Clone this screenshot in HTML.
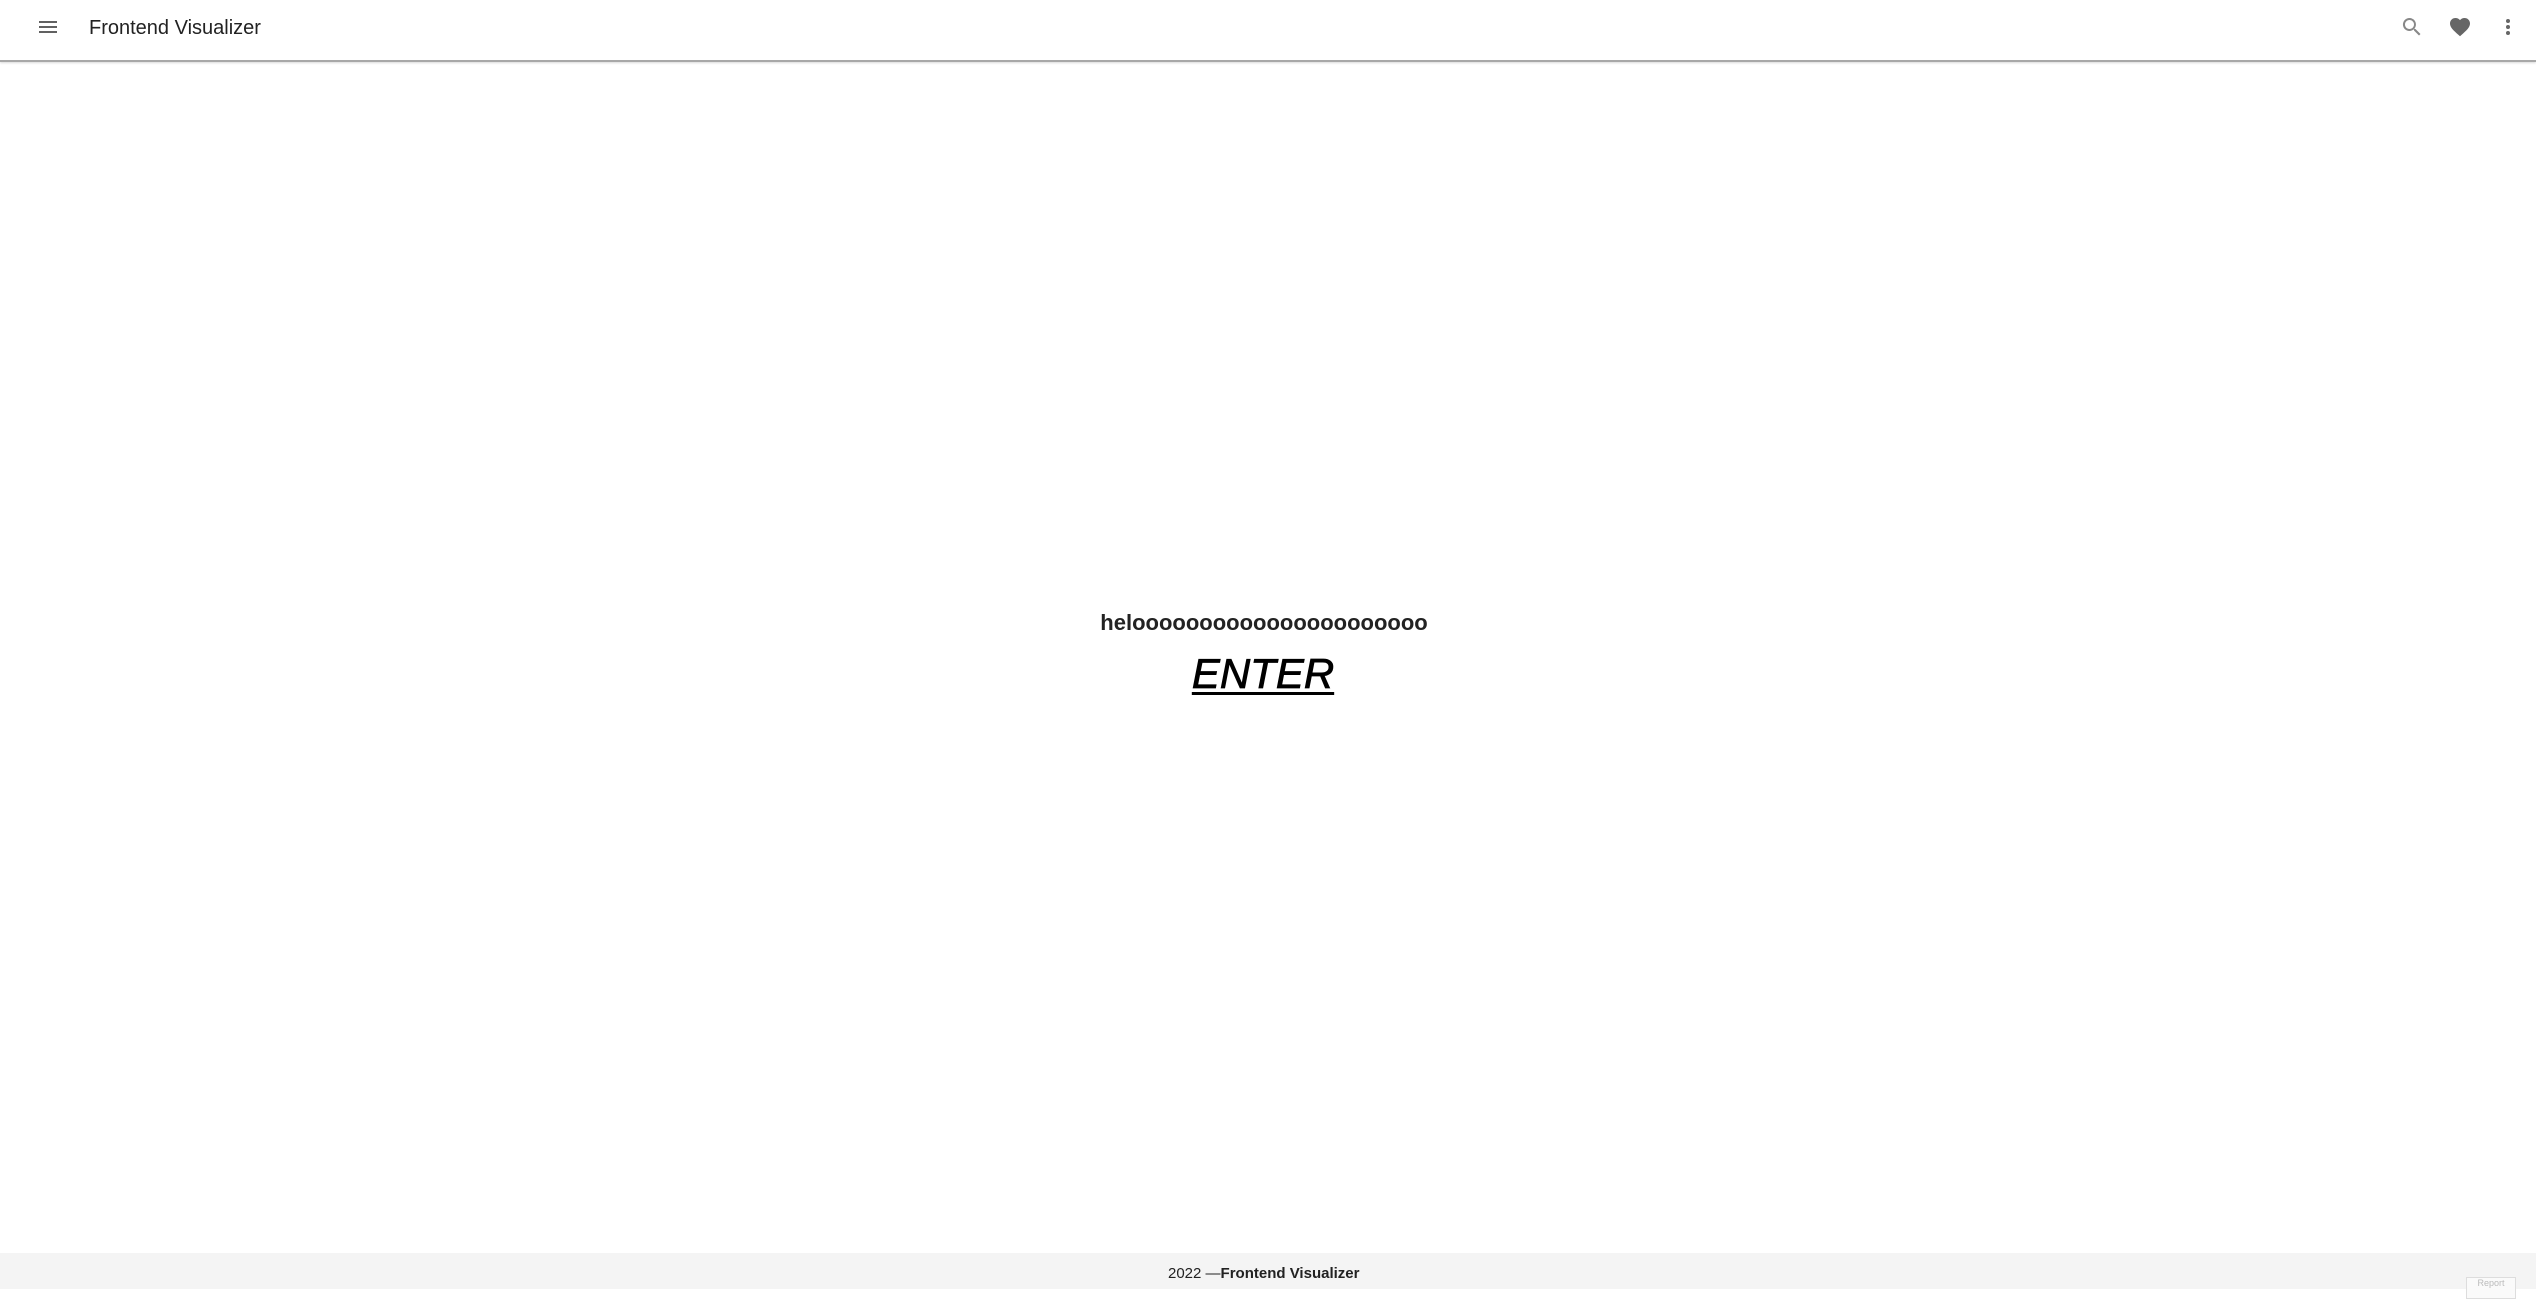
<!DOCTYPE html>
<html><head><style>
html,body{margin:0;padding:0;width:2536px;height:1289px;overflow:hidden;background:#fff;font-family:"Liberation Sans",sans-serif;}
.hdr{position:absolute;left:0;top:0;width:2536px;height:60px;background:#fff;border-bottom:2px solid #a8a8a8;box-shadow:0 1px 2px rgba(0,0,0,.15);}
.title{position:absolute;left:89px;top:17px;font-size:20px;color:#222;}
.ic{position:absolute;top:15px;}
.helo{position:absolute;left:-4px;width:2536px;top:610px;font-size:22px;font-weight:bold;color:#222;text-align:center;}
.enter{position:absolute;left:-5px;width:2536px;top:650px;font-size:42px;font-style:italic;color:#000;text-align:center;-webkit-text-stroke:0.8px #000;}
.enter span{text-decoration:underline;text-decoration-thickness:3px;text-underline-offset:4px;}
.ftr{position:absolute;left:0;top:1253px;width:2536px;height:36px;background:#f4f4f4;}
.ftr .t{position:absolute;left:1168px;top:12px;font-size:15px;color:#222;}
.rep{position:absolute;left:2466px;top:1277px;width:48px;height:20px;border:1px solid #ddd;background:#fafafa;font-size:9px;color:#bbb;text-align:center;}
</style></head><body>
<div class="hdr">
<svg class="ic" style="left:36px" width="24" height="24" viewBox="0 0 24 24"><path d="M3 6h18v2H3zm0 5h18v2H3zm0 5h18v2H3z" fill="#616161"/></svg>
<div class="title">Frontend Visualizer</div>
<svg class="ic" style="left:2400px" width="24" height="24" viewBox="0 0 24 24"><path d="M15.5 14h-.8l-.3-.3A6.5 6.5 0 1 0 9.5 16c1.6 0 3.1-.6 4.2-1.6l.3.3v.8l5 5 1.5-1.5-5-5zm-6 0C7 14 5 12 5 9.5S7 5 9.5 5 14 7 14 9.5 12 14 9.5 14z" fill="#888"/></svg>
<svg class="ic" style="left:2448px" width="24" height="24" viewBox="0 0 24 24"><path d="M12 21.3l-1.4-1.3C5.4 15.4 2 12.3 2 8.5 2 5.4 4.4 3 7.5 3c1.7 0 3.4.8 4.5 2.1C13.1 3.8 14.8 3 16.5 3 19.6 3 22 5.4 22 8.5c0 3.8-3.4 6.9-8.6 11.5z" fill="#666"/></svg>
<svg class="ic" style="left:2496px" width="24" height="24" viewBox="0 0 24 24"><circle cx="12" cy="6" r="2" fill="#666"/><circle cx="12" cy="12" r="2" fill="#666"/><circle cx="12" cy="18" r="2" fill="#666"/></svg>
</div>
<div class="helo">heloooooooooooooooooooooo</div>
<div class="enter"><span>ENTER</span></div>
<div class="ftr"><div class="t">2022 —<b>Frontend Visualizer</b></div></div>
<div class="rep">Report</div>
</body></html>
